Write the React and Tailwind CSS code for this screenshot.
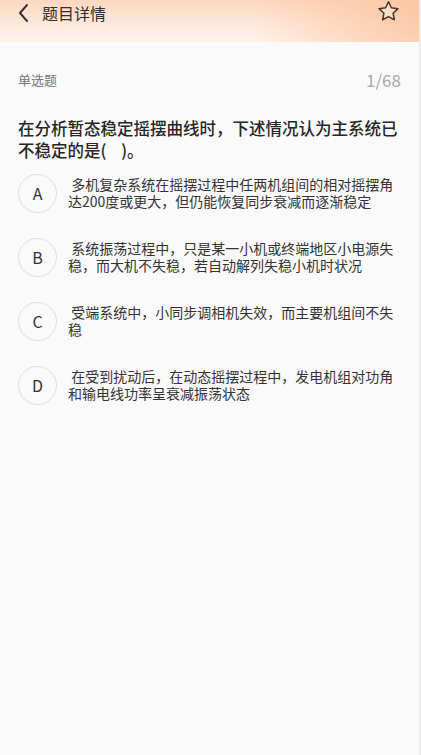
// App.jsx
const options = [
  { key: 'A', text: '多机复杂系统在摇摆过程中任两机组间的相对摇摆角达200度或更大，但仍能恢复同步衰减而逐渐稳定' },
  { key: 'B', text: '系统振荡过程中，只是某一小机或终端地区小电源失稳，而大机不失稳，若自动解列失稳小机时状况' },
  { key: 'C', text: '受端系统中，小同步调相机失效，而主要机组间不失稳' },
  { key: 'D', text: '在受到扰动后，在动态摇摆过程中，发电机组对功角和输电线功率呈衰减振荡状态' },
];

const font = { fontFamily: '"Noto Sans CJK SC", "Noto Sans", sans-serif' };

const BackIcon = () => (
  <svg width="14" height="20" viewBox="0 0 14 20" fill="none">
    <polyline points="10,2 3,10 10,18" stroke="#2f2f2f" strokeWidth="1.9" strokeLinecap="round" strokeLinejoin="round" />
  </svg>
);

const StarIcon = () => (
  <svg width="25" height="25" viewBox="0 0 24 24" fill="none">
    <path
      d="M12 2.6l2.75 5.85 6.35.8-4.68 4.4 1.2 6.3L12 16.9l-5.62 3.05 1.2-6.3L2.9 9.25l6.35-.8z"
      fill="#fde0c9"
      stroke="#4a3528"
      strokeWidth="1.45"
      strokeLinejoin="round"
    />
  </svg>
);

const App = () => (
  <div className="w-[421px] h-[755px] flex bg-[#fafafa] overflow-hidden" style={font}>
    <div className="flex-1 flex flex-col">
      <header className="h-[42px] bg-[radial-gradient(circle_at_100%_0%,#fcc7a4_0%,rgba(252,199,164,0)_40%),linear-gradient(180deg,#fdd7c0_0%,#feeadd_60%,#fff2e9_100%)]">
        <div className="h-[25px] flex items-center pl-[17px] pr-[18px]">
          <BackIcon />
          <span className="ml-[11px] text-[16px] text-[#2f2f2f]">题目详情</span>
          <div className="ml-auto -mt-[2px]">
            <StarIcon />
          </div>
        </div>
      </header>

      <main className="flex flex-col">
        <div className="mt-[28px] px-[18px] flex items-center justify-between h-[20px]">
          <span className="text-[13px] text-[#777]">单选题</span>
          <span className="text-[17px] text-[#aaa]">1/68</span>
        </div>

        <p className="mt-[27px] px-[18px] text-[16.5px] leading-[22px] font-medium text-[#262626]">
          在分析暂态稳定摇摆曲线时，下述情况认为主系统已不稳定的是(&nbsp;&nbsp;&nbsp;&nbsp;)。
        </p>

        <ul>
          {options.map((o) => (
            <li key={o.key} className="h-[64px] flex items-center pl-[18px] pr-[18px]">
              <div className="w-[39px] h-[39px] shrink-0 rounded-full border-[1.5px] border-[#dedede] flex items-center justify-center text-[16px] text-[#333]">
                {o.key}
              </div>
              <p className="ml-[11px] flex-1 text-[14px] leading-[17px] text-[#333]">
                {'\u00a0' + o.text}
              </p>
            </li>
          ))}
        </ul>
      </main>
    </div>
    <div className="w-[2px] bg-[#ececec]" />
  </div>
);

export default App;
